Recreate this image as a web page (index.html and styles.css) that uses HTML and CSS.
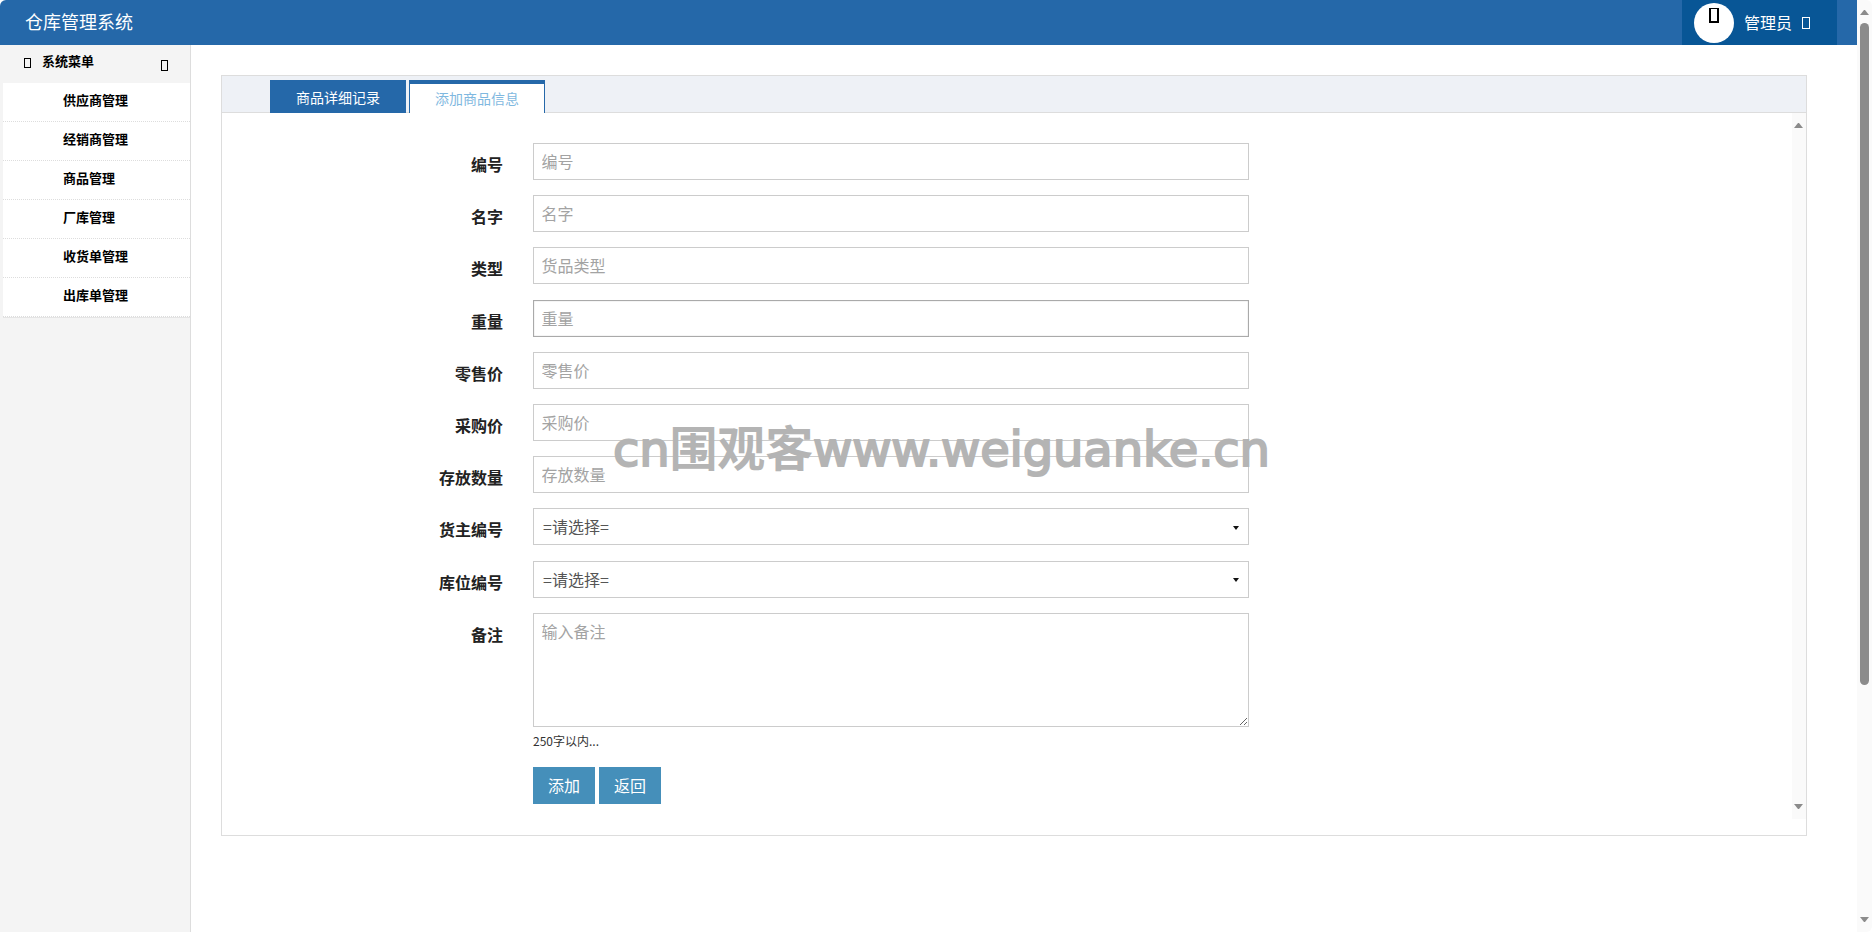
FILE: index.html
```html
<!DOCTYPE html>
<html lang="zh-CN">
<head>
<meta charset="utf-8">
<title>仓库管理系统</title>
<link rel="stylesheet" href="styles.css">
</head>
<body>
<div class="app">
  <div class="page">
    <header class="topbar">
      <div class="brand">仓库管理系统</div>
      <div class="user">
        <span class="avatar"><i class="tofu tofu-avatar"></i></span>
        <span class="user-name">管理员</span>
        <i class="tofu tofu-user"></i>
      </div>
    </header>
    <div class="body">
      <aside class="sidebar">
        <div class="menu-head">
          <i class="tofu tofu-head"></i>
          <span class="menu-title">系统菜单</span>
          <i class="tofu tofu-caret"></i>
        </div>
        <ul class="menu">
          <li>供应商管理</li>
          <li>经销商管理</li>
          <li>商品管理</li>
          <li>厂库管理</li>
          <li>收货单管理</li>
          <li>出库单管理</li>
        </ul>
      </aside>
      <main class="content">
        <section class="box">
          <div class="tabs">
            <div class="tab tab-solid">商品详细记录</div>
            <div class="tab tab-active">添加商品信息</div>
          </div>
          <div class="panel">
            <form class="form">
              <label class="lbl">编号</label><input class="ctl" placeholder="编号">
              <label class="lbl">名字</label><input class="ctl" placeholder="名字">
              <label class="lbl">类型</label><input class="ctl" placeholder="货品类型">
              <label class="lbl">重量</label><input class="ctl ctl-hover" placeholder="重量">
              <label class="lbl">零售价</label><input class="ctl" placeholder="零售价">
              <label class="lbl">采购价</label><input class="ctl" placeholder="采购价">
              <label class="lbl">存放数量</label><input class="ctl" placeholder="存放数量">
              <label class="lbl">货主编号</label><div class="ctl sel">=请选择=<i class="sel-arrow"></i></div>
              <label class="lbl">库位编号</label><div class="ctl sel">=请选择=<i class="sel-arrow"></i></div>
              <label class="lbl">备注</label>
              <div class="note">
                <textarea class="ctl area" placeholder="输入备注"></textarea>
                <p class="hint">250字以内...</p>
                <div class="actions">
                  <button type="button" class="btn">添加</button>
                  <button type="button" class="btn">返回</button>
                </div>
              </div>
            </form>
            <div class="vbar vbar-inner"><i class="arr arr-up"></i><i class="arr arr-down"></i></div>
          </div>
        </section>
      </main>
    </div>
  </div>
  <div class="vbar vbar-page">
    <i class="arr arr-up"></i>
    <i class="thumb"></i>
    <i class="arr arr-down"></i>
  </div>
</div>
<div class="watermark">cn<span class="wm-cjk">围观客</span>www.weiguanke.cn</div>
</body>
</html>
```
FILE: styles.css
```css
* { box-sizing: border-box; }
html, body { margin: 0; height: 100%; overflow: hidden; background: #fff; }
body { font-family: "Noto Sans CJK SC", "Liberation Sans", sans-serif; color: #333; }
i { display: block; font-style: normal; }

.app { display: flex; width: 1872px; height: 932px; position: relative; }
.page { width: 1857px; display: flex; flex-direction: column; }

.topbar { height: 45px; flex: none; background: #2568a9; display: flex; justify-content: space-between; border-top-left-radius: 6px; }
.brand { color: #fff; font-size: 18px; line-height: 43px; padding-left: 25px; }
.user { width: 155px; margin-right: 20px; background: #085696; display: flex; align-items: center; padding-left: 12px; color: #fff; }
.avatar { width: 40px; height: 40px; border-radius: 50%; background: #fff; display: flex; justify-content: center; padding-top: 5px; }
.user-name { font-size: 16px; margin-left: 10px; line-height: 43px; }
.tofu { border: 1px solid currentColor; }
.tofu-avatar { width: 10px; height: 15px; border: 2px solid #000; border-top-width: 1px; }
.tofu-user { width: 8px; height: 12px; margin-left: 10px; }
.tofu-head { width: 7px; height: 10px; color: #000; margin-left: 24px; margin-top: -3px; }
.tofu-caret { width: 7px; height: 11px; color: #000; margin-left: 67px; margin-top: 3px; }

.body { flex: 1; display: flex; min-height: 0; }
.sidebar { width: 191px; flex: none; background: #f4f4f4; border-right: 1px solid #ddd; }
.menu-head { height: 38px; display: flex; align-items: center; color: #000; }
.menu-title { font-size: 13px; font-weight: 700; margin-left: 11px; margin-top: -7px; }
.menu { list-style: none; margin: 0 0 0 3px; padding: 0; background: #fff; border-bottom: 1px solid #e4e4e4; }
.menu li { height: 39px; line-height: 34px; padding-left: 60px; font-size: 13px; font-weight: 700; color: #000; border-bottom: 1px dotted #ddd; }

.content { flex: 1; padding: 30px 50px 0 30px; }
.box { height: 761px; border: 1px solid #ddd; display: flex; flex-direction: column; }
.tabs { height: 37px; flex: none; background: #eef1f6; border-bottom: 1px solid #ddd; display: flex; gap: 3px; padding: 4px 0 0 48px; }
.tab { width: 136px; height: 33px; font-size: 14px; text-align: center; line-height: 35px; }
.tab-solid { background: #2568a9; color: #fff; }
.tab-active { background: #fff; color: #7fb8e0; border: 1px solid #2568a9; border-top-width: 4px; border-bottom: 0; line-height: 29px; }

.panel { height: 706px; display: flex; flex: none; }
.form { flex: 1; display: grid; grid-template-columns: 281px 716px; column-gap: 30px; row-gap: 15.2px; align-content: start; padding-top: 30px; }
.lbl { font-size: 16px; font-weight: 700; text-align: right; color: #222; line-height: 24px; padding-top: 9px; }
.ctl { height: 37px; width: 716px; border: 1px solid #ccc; padding: 0 7.5px 1px; font: 16px "Noto Sans CJK SC", "Liberation Sans", sans-serif; color: #555; outline: 0; background: #fff; border-radius: 0; margin: 0; display: block; }
.ctl::placeholder { color: #a3a3a3; opacity: 1; }
.ctl-hover { border-color: #aaa; box-shadow: inset 0 0 1px #999; }
.sel { display: flex; align-items: center; justify-content: space-between; line-height: 35px; padding: 0 9px; }
.sel-arrow { border: 3px solid transparent; border-top: 4px solid #111; border-bottom: 0; margin-top: 2px; }
.note { min-width: 0; }
.area { height: 114px; padding-top: 5px; resize: both; }
.hint { margin: 5px 0 0; font-size: 12px; line-height: 18px; color: #333; }
.actions { display: flex; gap: 4px; margin-top: 17px; }
.btn { width: 62px; height: 37px; border: 0; padding: 0; background: #458fba; color: #fff; font: 16px "Noto Sans CJK SC", "Liberation Sans", sans-serif; border-radius: 0; }

.vbar { flex: none; background: #fafafa; display: flex; flex-direction: column; align-items: center; justify-content: space-between; }
.vbar-inner { width: 14px; padding: 10px 1px 10px 0; }
.vbar-page { width: 15px; height: 932px; padding: 10px 0; border-top-right-radius: 6px; border-bottom-right-radius: 6px; }
.thumb { width: 9px; height: 662px; background: #8b8b8b; border-radius: 5px; margin-bottom: auto; margin-top: 8px; }
.arr { width: 9px; height: 5px; border-left: 4.5px solid transparent; border-right: 4.5px solid transparent; }
.arr-up { border-bottom: 5px solid #8b8b8b; }
.arr-down { border-top: 5px solid #8b8b8b; }

.watermark { position: absolute; left: 613px; top: 417px; font: 400 48px/56px "DejaVu Sans", sans-serif; letter-spacing: -0.15px; -webkit-text-stroke: 2px #b4b4b4; color: #b4b4b4; white-space: nowrap; pointer-events: none; }
.wm-cjk { font-family: "Noto Sans CJK SC", sans-serif; font-weight: 700; -webkit-text-stroke: 0; }
```
